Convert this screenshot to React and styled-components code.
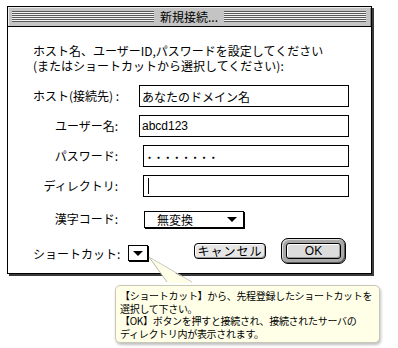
import React from 'react';
import styled, { createGlobalStyle } from 'styled-components';

const GlobalStyle = createGlobalStyle`
    html, body {
        margin: 0;
        padding: 0;
        background: #ffffff;
    }
    body {
        font-family: 'Noto Sans CJK JP', 'Noto Sans', sans-serif;
        font-size: 12px;
        color: #000;
    }
`;

const App = () => {
    return (
        <Page>
            <GlobalStyle />

            <Window>
                <TitleBar>
                    <Stripes />
                    <Title>新規接続...</Title>
                    <Stripes />
                </TitleBar>

                <Body>
                    <Intro>
                        ホスト名、ユーザーID,パスワードを設定してください
                        <br />
                        (またはショートカットから選択してください):
                    </Intro>

                    {/* Connection fields */}
                    <Form>
                        <Label>ホスト(接続先)&nbsp;:</Label>
                        <Field>あなたのドメイン名</Field>

                        <Label>ユーザー名:</Label>
                        <Field $latin>abcd123</Field>

                        <Label>パスワード:</Label>
                        <Field $indent={4} $dots>········</Field>

                        <Label>ディレクトリ:</Label>
                        <Field $indent={4}>
                            <Caret />
                        </Field>

                        <Label $top={3}>漢字コード:</Label>
                        <Select>
                            <span>無変換</span>
                            <Arrow />
                        </Select>
                    </Form>

                    <ButtonRow>
                        <RowLabel>ショートカット:</RowLabel>
                        <MiniPop>
                            <Arrow />
                        </MiniPop>
                        <Button>キャンセル</Button>
                        <DefaultRing>
                            <DefaultButton>OK</DefaultButton>
                        </DefaultRing>
                    </ButtonRow>
                </Body>
            </Window>

            {/* Help balloon */}
            <Balloon>
                【ショートカット】から、先程登録したショートカットを
                <br />
                選択して下さい。
                <br />
                【OK】ボタンを押すと接続され、接続されたサーバの
                <br />
                ディレクトリ内が表示されます。
            </Balloon>
            <Tail viewBox="0 0 50 30" width="50" height="30">
                <polygon points="3,2 22,28 46,28" fill="#ffffe8" />
                <polyline points="3,2 21,27" fill="none" stroke="#b8b8a8" strokeWidth="1" />
                <polyline points="3,2 46,27" fill="none" stroke="#c8c8c0" strokeWidth="1" />
            </Tail>
        </Page>
    );
};

const Page = styled.div`
    position: relative;
    width: 398px;
    height: 348px;
    padding: 6px 0 0 7px;
    box-sizing: border-box;
    overflow: hidden;
`;

const Window = styled.div`
    width: 365px;
    box-sizing: border-box;
    border: 1px solid #000;
    box-shadow: 2px 2px 0 #3a3a3a;
    background: #fff;
`;

const TitleBar = styled.div`
    display: flex;
    align-items: center;
    height: 19px;
    padding: 0 5px 0 4px;
    gap: 4px;
    background: #c4c4c4;
    border-bottom: 1px solid #000;
    box-shadow: inset 1px 1px 0 #eeeeee, inset -1px 0 0 #888;
`;

const Stripes = styled.div`
    flex: 1;
    height: 11px;
    background: repeating-linear-gradient(
        to bottom,
        #5a5a5a 0px,
        #5a5a5a 1px,
        #f2f2f2 1px,
        #f2f2f2 2px
    );
`;

const Title = styled.div`
    font-size: 12px;
    line-height: 19px;
    padding: 0 2px;
`;

const Body = styled.div`
    padding: 16px 22px 9px 25px;
`;

const Intro = styled.div`
    line-height: 15px;
    font-size: 12px;
    white-space: nowrap;
`;

const Form = styled.div`
    display: grid;
    grid-template-columns: 85px 1fr;
    column-gap: 21px;
    row-gap: 8px;
    margin-top: 12px;
    align-items: center;
`;

const Label = styled.div`
    text-align: right;
    white-space: nowrap;
    line-height: 22px;
    margin-top: ${(p) => p.$top || 0}px;
`;

const Field = styled.div`
    display: flex;
    align-items: center;
    height: 22px;
    box-sizing: border-box;
    margin-left: ${(p) => p.$indent || 0}px;
    padding-left: 2px;
    border: 1px solid #000;
    font-family: ${(p) => (p.$latin ? "'Liberation Sans', sans-serif" : "inherit")};
    font-size: 12px;
    letter-spacing: ${(p) => (p.$dots ? '2px' : '0')};
    font-weight: ${(p) => (p.$dots ? 'bold' : 'normal')};
    white-space: nowrap;
`;

const Caret = styled.div`
    width: 1px;
    height: 16px;
    margin-left: 2px;
    background: #000;
`;

const Select = styled.div`
    display: flex;
    align-items: center;
    justify-content: space-between;
    width: 100px;
    height: 17px;
    box-sizing: border-box;
    margin: 3px 0 0 5px;
    padding: 0 6px 0 12px;
    border: 1px solid #000;
    box-shadow: 1px 1px 0 #000;
    font-size: 12px;
    line-height: 15px;
`;

const Arrow = styled.div`
    width: 0;
    height: 0;
    border-left: 5px solid transparent;
    border-right: 5px solid transparent;
    border-top: 5px solid #000;
`;

const ButtonRow = styled.div`
    display: flex;
    align-items: center;
    height: 26px;
    margin-top: 8px;
`;

const RowLabel = styled.div`
    width: 85px;
    text-align: right;
    white-space: nowrap;
    margin-top: 4px;
`;

const MiniPop = styled.div`
    display: flex;
    align-items: center;
    justify-content: center;
    width: 20px;
    height: 16px;
    box-sizing: border-box;
    margin: 4px 0 0 10px;
    border: 1px solid #000;
    box-shadow: 1px 1px 0 #000;
    background: #fff;
`;

const Button = styled.div`
    display: flex;
    align-items: center;
    justify-content: center;
    width: 72px;
    height: 16px;
    box-sizing: border-box;
    margin-left: 46px;
    border: 1px solid #000;
    border-radius: 4px;
    background: #e6e6e6;
    box-shadow: inset 1px 1px 0 #fff, inset -1px -1px 0 #9a9a9a;
    font-size: 12px;
    letter-spacing: 1px;
    line-height: 14px;
`;

const DefaultRing = styled.div`
    display: flex;
    align-items: center;
    justify-content: center;
    width: 65px;
    height: 26px;
    box-sizing: border-box;
    margin-left: 15px;
    border: 1px solid #000;
    border-radius: 7px;
    background: #a8a8a8;
    box-shadow: inset 1px 1px 0 #e0e0e0, inset -1px -1px 0 #5a5a5a;
`;

const DefaultButton = styled.div`
    display: flex;
    align-items: center;
    justify-content: center;
    width: 55px;
    height: 16px;
    box-sizing: border-box;
    border: 1px solid #000;
    border-radius: 3px;
    background: #dcdcdc;
    box-shadow: inset 1px 1px 0 #fff, inset -1px -1px 0 #9a9a9a;
    font-family: 'Liberation Sans', sans-serif;
    font-size: 12px;
`;

const Balloon = styled.div`
    width: 265px;
    height: 58px;
    box-sizing: border-box;
    margin: 11px 0 0 108px;
    padding: 4px 0 0 4px;
    background: #ffffe8;
    border: 1px solid #c8c8b8;
    border-radius: 5px;
    box-shadow: 1px 2px 3px rgba(0, 0, 0, 0.25);
    font-size: 10px;
    line-height: 12.5px;
    letter-spacing: -0.3px;
    white-space: nowrap;
`;

const Tail = styled.svg`
    position: absolute;
    left: 146px;
    top: 255px;
    pointer-events: none;
`;

export default App;
